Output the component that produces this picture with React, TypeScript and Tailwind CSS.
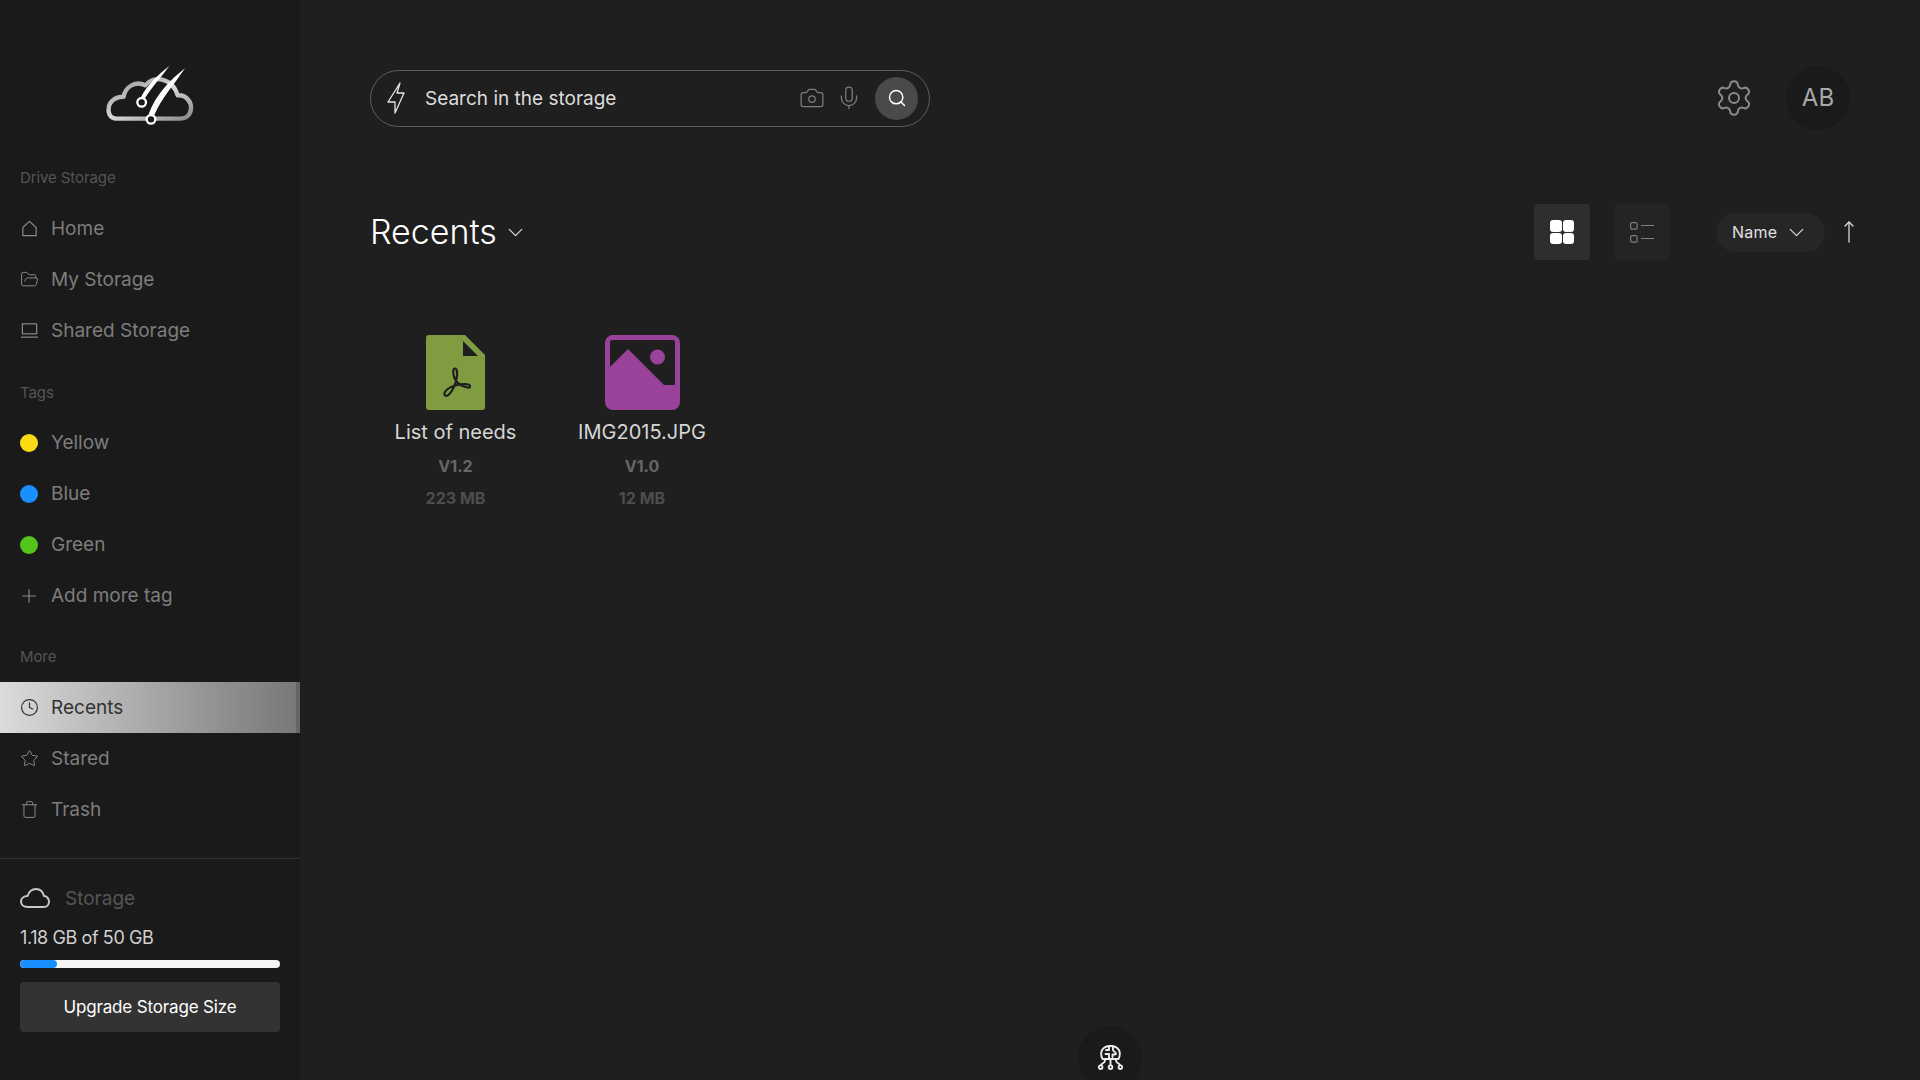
import React from 'react';
import { FolderOpen, Plus, Clock, Star, Trash, Camera, Mic, Search, Settings, ChevronDown, MoveUp } from 'lucide-react';

const navIcon = 'w-[19px] h-[19px] text-[#8a8a8a] shrink-0';

function Logo() {
  return (
    <svg viewBox="0 0 360 270" className="w-[120px] h-[90px]">
      <defs>
        <linearGradient id="cloudFade" x1="0" y1="0" x2="1" y2="1">
          <stop offset="0" stopColor="#8f8f8f" />
          <stop offset="0.5" stopColor="#d8d8d8" />
          <stop offset="1" stopColor="#8a8a8a" />
        </linearGradient>
      </defs>
      <path
        d="M80 206 C58 206 54 186 56 174 C59 152 78 140 101 140 C105 112 136 90 166 106 C188 76 246 80 263 136 C290 134 305 158 303 176 C301 196 288 206 270 206 Z"
        fill="none"
        stroke="url(#cloudFade)"
        strokeWidth="13"
        strokeLinejoin="round"
      />
      <path d="M152 143 C172 104 202 76 238 48 C212 84 186 110 164 146 Z" fill="#fff" />
      <circle cx="155" cy="157" r="13" fill="#1a1a1a" stroke="#fff" strokeWidth="7" />
      <path d="M176 192 C198 134 238 92 285 55 C252 104 214 146 193 195 Z" fill="#fff" />
      <circle cx="183" cy="208" r="13" fill="#1a1a1a" stroke="#fff" strokeWidth="7" />
    </svg>
  );
}

function HomeIcon() {
  return (
    <svg viewBox="0 0 20 20" className={navIcon} fill="none" stroke="currentColor" strokeWidth="1.25" strokeLinejoin="round">
      <path d="M3 9 L10 2.5 L17 9 V17.5 H3 Z" />
    </svg>
  );
}

function LaptopIcon() {
  return (
    <svg viewBox="0 0 20 20" className={navIcon} fill="none" stroke="currentColor" strokeWidth="1.25">
      <rect x="2.5" y="3" width="15" height="10.5" />
      <path d="M1 17 H19" />
    </svg>
  );
}

function CloudIcon() {
  return (
    <svg viewBox="0 0 30 20" className="w-[30px] h-5 shrink-0" fill="none" stroke="#c8c8c8" strokeWidth="2" strokeLinejoin="round">
      <path d="M8 19 C3 19 1 16 1 13.5 C1 10 4 8 7.5 8 C9 3.5 12 1 16 1 C20 1 23 4 24 8 C27 8 29 11 29 13.5 C29 16.5 27 19 24 19 Z" />
    </svg>
  );
}

function BoltIcon() {
  return (
    <svg viewBox="0 0 18 32" className="w-[18px] h-8 shrink-0" fill="none" stroke="#e6e6e6" strokeWidth="1.3" strokeLinejoin="round">
      <path d="M13 1 L1 20 H8 V31 L17 11 H10 Z" />
    </svg>
  );
}

function NavItem({ icon, label, active }: { icon: React.ReactNode; label: string; active?: boolean }) {
  return (
    <div
      className={`h-[51px] flex items-center gap-[13px] pl-5 text-[19px] ${
        active
          ? 'bg-gradient-to-r from-[#dcdcdc] to-[#787878] text-[#333333] border-r-4 border-[#666666]'
          : 'text-[#7d7d7d]'
      }`}
    >
      <span className="w-[18px] flex justify-center">{icon}</span>
      <span className="mt-[2px]">{label}</span>
    </div>
  );
}

function Dot({ color }: { color: string }) {
  return <span className={`w-[18px] h-[18px] rounded-full shrink-0 ${color}`} />;
}

function SectionLabel({ children, className }: { children: React.ReactNode; className: string }) {
  return <div className={`h-5 pl-5 flex items-center text-[15px] tracking-[-0.1px] text-[#555555] ${className}`}>{children}</div>;
}

function PdfIcon() {
  return (
    <svg viewBox="0 0 59 75" className="w-[59px] h-[75px]">
      <path d="M3 0 H39 L59 20 V72 Q59 75 56 75 H3 Q0 75 0 72 V3 Q0 0 3 0 Z" fill="#7f9c40" />
      <path d="M37 6 L52 21 H37 Z" fill="#1f1f1f" />
      <path
        d="M29 33.5 C26.5 33.5 27 39 28.5 43 C30 47 33 50 38 51.5 C41 52.5 44.5 53.5 44 51 C43.5 48.5 36 49 31 50 C27 51 21 53 19 57 C17 60.5 20.5 62 23 59.5 C26 56.5 29 50 30.5 44 C31.5 40 31.5 33.5 29 33.5 Z"
        fill="none"
        stroke="#1f1f1f"
        strokeWidth="2.2"
        strokeLinejoin="round"
      />
    </svg>
  );
}

function ImageIcon() {
  return (
    <svg viewBox="0 0 75 75" className="w-[75px] h-[75px]">
      <rect width="75" height="75" rx="8" fill="#9a4299" />
      <path d="M5 32 V7 Q5 5 7 5 H68 Q70 5 70 7 V50 H59 L23 14 Z" fill="#1f1f1f" />
      <circle cx="52.5" cy="22" r="7.5" fill="#9a4299" />
    </svg>
  );
}

function BrainIcon() {
  return (
    <svg viewBox="0 0 25 25" className="w-[25px] h-[25px]" fill="none" stroke="#ececec" strokeWidth="1.9" strokeLinecap="round" strokeLinejoin="round">
      <path d="M4.5 14 C1.5 8 3.5 1 12.5 1 C21.5 1 23.5 8 20.5 14 Z" />
      <path d="M11 1.5 V5 H8 M7.5 9 H11 V14 M15 1.5 V5 C15 7 18 6 18 9 M14.5 9.5 H17 M14.5 9.5 V12" />
      <path d="M7 14 V15.5 C7 18 4 18 3 20 M12.5 14 V20 M18 14 V15.5 C18 18 21 18 22 20" />
      <circle cx="2.6" cy="22.2" r="1.8" />
      <circle cx="12.5" cy="22.2" r="1.8" />
      <circle cx="22.4" cy="22.2" r="1.8" />
    </svg>
  );
}

function GridIcon() {
  return (
    <span className="grid grid-cols-2 gap-[1px] w-6 h-6">
      <span className="bg-white rounded-[3px]" />
      <span className="bg-white rounded-[3px]" />
      <span className="bg-white rounded-[3px]" />
      <span className="bg-white rounded-[3px]" />
    </span>
  );
}

function ListIcon() {
  return (
    <svg viewBox="0 0 24 22" className="w-6 h-[22px]" fill="none" stroke="#7d7d7d" strokeWidth="1.2">
      <rect x="0.6" y="1.6" width="6.5" height="6.5" rx="1.4" />
      <rect x="0.6" y="14.6" width="6.5" height="6.5" rx="1.4" />
      <path d="M11 4.5 H24 M11 17.5 H24" />
    </svg>
  );
}

function FileCard({ icon, name, version, size, width }: { icon: React.ReactNode; name: string; version: string; size: string; width: string }) {
  return (
    <div className={`flex flex-col items-center ${width}`}>
      <div className="h-[75px] flex items-center">{icon}</div>
      <div className="mt-[8px] h-7 flex items-center text-[20px] text-[#d6d6d6]">{name}</div>
      <div className="mt-[10px] h-5 flex items-center text-[16px] font-bold text-[#666666]">{version}</div>
      <div className="mt-[12px] h-5 flex items-center text-[16px] font-bold text-[#4d4d4d]">{size}</div>
    </div>
  );
}

export default function App() {
  return (
    <div className="flex h-[1080px] w-[1920px] overflow-hidden bg-[#1f1f1f] font-['Inter',sans-serif]">
      <aside className="w-[300px] shrink-0 bg-[#1a1a1a] flex flex-col">
        <div className="h-[168px] flex justify-center pt-[50px]">
          <Logo />
        </div>
        <SectionLabel className="mb-[15px]">Drive Storage</SectionLabel>
        <NavItem icon={<HomeIcon />} label="Home" />
        <NavItem icon={<FolderOpen className={navIcon} strokeWidth={1.25} />} label="My Storage" />
        <NavItem icon={<LaptopIcon />} label="Shared Storage" />
        <SectionLabel className="mt-[27px] mb-[14px]">Tags</SectionLabel>
        <NavItem icon={<Dot color="bg-[#fadb14]" />} label="Yellow" />
        <NavItem icon={<Dot color="bg-[#1890ff]" />} label="Blue" />
        <NavItem icon={<Dot color="bg-[#52c41a]" />} label="Green" />
        <NavItem icon={<Plus className="w-[22px] h-[22px] text-[#8a8a8a] shrink-0" strokeWidth={1.25} />} label="Add more tag" />
        <SectionLabel className="mt-[26px] mb-[15px]">More</SectionLabel>
        <NavItem active icon={<Clock className="w-[19px] h-[19px] text-[#333333] shrink-0" strokeWidth={1.5} />} label="Recents" />
        <NavItem icon={<Star className={navIcon} strokeWidth={1.25} />} label="Stared" />
        <NavItem icon={<Trash className={navIcon} strokeWidth={1.25} />} label="Trash" />
        <div className="mt-[23px] border-t border-[#333333] pt-[29px] px-5">
          <div className="h-5 flex items-center gap-[15px] text-[19px] text-[#555555]">
            <CloudIcon />
            <span className="mt-[2px]">Storage</span>
          </div>
          <div className="mt-[17px] h-6 flex items-center text-[18px] tracking-[-0.4px] text-[#d0d0d0]">1.18 GB of 50 GB</div>
          <div className="mt-[11px] h-2 rounded-full bg-[#f5f5f5] overflow-hidden">
            <div className="h-full w-[37px] bg-[#1890ff] rounded-full" />
          </div>
          <button className="mt-[14px] w-full h-[50px] pt-[2px] rounded-[4px] bg-[#333333] text-white text-[17px] tracking-[-0.15px]">
            Upgrade Storage Size
          </button>
        </div>
      </aside>

      <main className="relative flex-1 pl-[70px] pr-[70px] pt-[66px]">
        <div className="flex items-center justify-between h-16">
          <div className="w-[560px] h-[57px] rounded-full border border-[#5e5e5e] flex items-center pl-4 pr-[11px]">
            <BoltIcon />
            <span className="ml-[20px] mt-[2px] text-[19px] text-[#dcdcdc]">Search in the storage</span>
            <Camera className="ml-auto w-[26px] h-[26px] text-[#7d7d7d]" strokeWidth={1.15} />
            <Mic className="ml-[11px] w-[26px] h-[26px] text-[#7d7d7d]" strokeWidth={1.15} />
            <span className="ml-[13px] w-[43px] h-[43px] rounded-full bg-[#4a4a4a] flex items-center justify-center">
              <Search className="w-[20px] h-[20px] text-white" strokeWidth={1.75} />
            </span>
          </div>
          <div className="flex items-center gap-[32px]">
            <Settings className="w-[40px] h-[40px] text-[#8a8a8a]" strokeWidth={1.2} />
            <div className="w-16 h-16 rounded-full bg-[#1a1a1a] flex items-center justify-center text-[24px] text-[#a8a8a8]">AB</div>
          </div>
        </div>

        <div className="mt-[74px] h-14 flex items-center -mr-[11px]">
          <h1 className="mb-[2px] text-[34px] font-light text-white">Recents</h1>
          <ChevronDown className="ml-[6px] w-[25px] h-[25px] text-[#d8d8d8]" strokeWidth={1.2} />
          <div className="ml-auto flex items-center">
            <span className="w-14 h-14 rounded-[4px] bg-[#2e2e2e] flex items-center justify-center">
              <GridIcon />
            </span>
            <span className="ml-6 w-14 h-14 rounded-[4px] bg-[#242424] flex items-center justify-center">
              <ListIcon />
            </span>
            <span className="ml-[46px] w-[109px] h-[39px] rounded-full bg-[#262626] flex items-center pl-4 text-[16px] tracking-[0.2px] text-[#e0e0e0]">
              Name
              <ChevronDown className="ml-[7px] w-[25px] h-[25px] text-[#d8d8d8]" strokeWidth={1.2} />
            </span>
            <MoveUp className="ml-[12px] w-[24px] h-[24px] text-[#e0e0e0]" strokeWidth={1.25} />
          </div>
        </div>

        <div className="mt-[75px] flex gap-[15px]">
          <FileCard width="w-[171px]" icon={<PdfIcon />} name="List of needs" version="V1.2" size="223 MB" />
          <FileCard width="w-[172px]" icon={<ImageIcon />} name="IMG2015.JPG" version="V1.0" size="12 MB" />
        </div>

        <div className="absolute left-[778px] top-[1026px] w-16 h-16 rounded-full bg-[#1a1a1a] flex justify-center pt-[19px]">
          <BrainIcon />
        </div>
      </main>
    </div>
  );
}
